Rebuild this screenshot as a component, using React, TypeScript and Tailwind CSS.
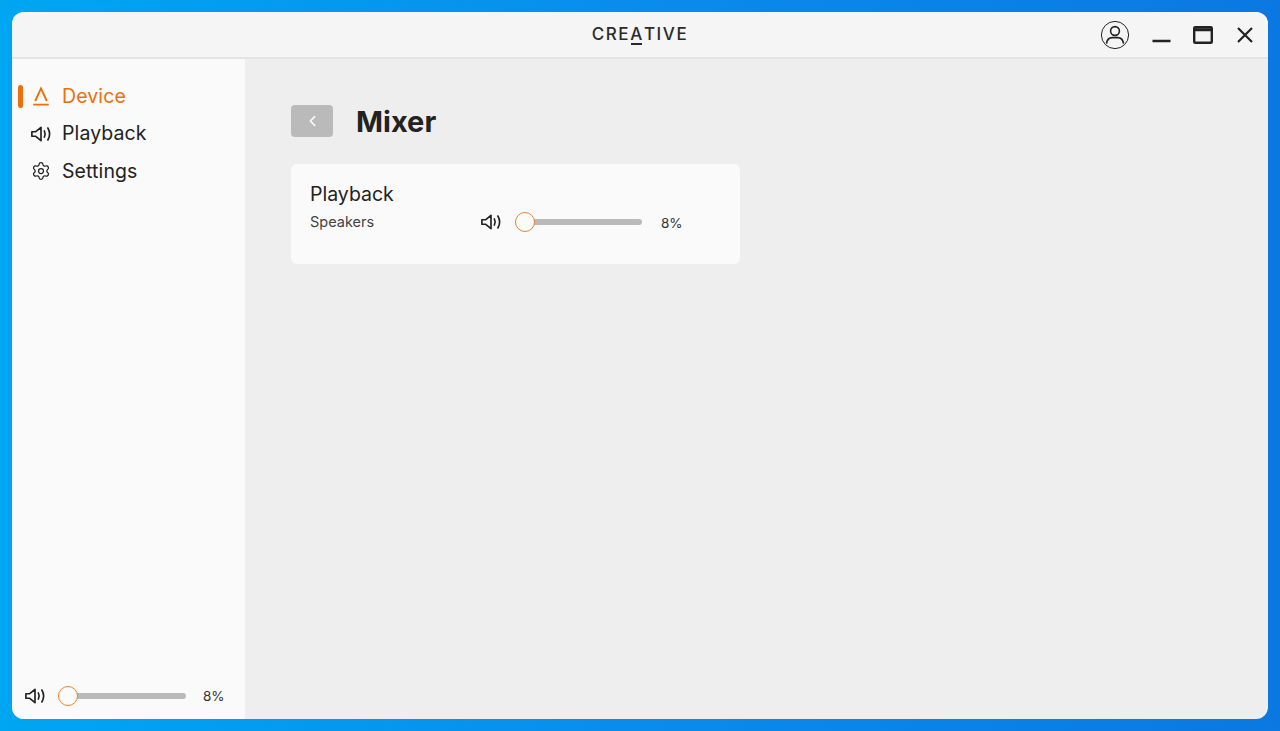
import { Settings } from "lucide-react";

const font = { fontFamily: "Inter, 'Noto Sans', sans-serif" };

function SpeakerIcon({ className }: { className?: string }) {
  return (
    <svg viewBox="0.4 1 18 18" fill="none" stroke="currentColor" strokeWidth="1.5" strokeLinecap="round" strokeLinejoin="round" className={className}>
      <path d="M1.2 8v4h3.2l5 4V4l-5 4z" />
      <path d="M12.4 7.2c.9 1.7.9 3.9 0 5.6" />
      <path d="M15.6 4.6c1.9 3.3 1.9 7.5 0 10.8" />
    </svg>
  );
}

function Slider({ width }: { width: string }) {
  return (
    <div className={`relative h-[6px] rounded-full bg-[#bababa] ${width}`}>
      <div className="absolute left-[-10px] top-[-7px] h-[20px] w-[20px] rounded-full border border-[#e8842c] bg-[#fbfbfb]" />
    </div>
  );
}

function NavItem({ label, active, icon }: { label: string; active?: boolean; icon: React.ReactNode }) {
  return (
    <div className="relative flex h-[37.5px] items-center">
      {active && <div className="absolute left-[6px] top-[7px] h-[23px] w-[5px] rounded-full bg-[#ec6f0e]" />}
      <div className={`ml-[19px] flex w-[20px] justify-center ${active ? "text-[#e8710e]" : "text-[#222]"}`}>{icon}</div>
      <span className={`ml-[11px] text-[19.5px] tracking-[0.1px] ${active ? "text-[#e8710e]" : "text-[#222]"}`}>{label}</span>
    </div>
  );
}

export default function App() {
  return (
    <div
      className="h-[731px] w-[1280px] overflow-hidden bg-gradient-to-r from-[#00a6f2] via-[#0a8cec] to-[#0b78e2] px-3 pb-3 pt-3"
      style={font}
    >
      <div className="flex h-[707px] w-[1256px] flex-col overflow-hidden rounded-[12px] bg-[#eeeeee]">
        <header className="relative flex h-[47px] shrink-0 items-center justify-center border-b-2 border-[#e4e4e4] bg-[#f5f5f5]">
          <div className="text-[17px] font-medium tracking-[1.6px] text-[#2a2a2a]">
            CRE
            <span className="relative">
              A<span className="absolute bottom-[-1px] left-[1px] right-[2px] h-[2px] bg-[#2a2a2a]" />
            </span>
            TIVE
          </div>
          <div className="absolute right-[14px] top-0 flex h-[46px] items-center text-[#222]">
            <svg viewBox="0 0 30 30" fill="none" stroke="currentColor" className="mr-[22px] h-[30px] w-[30px]">
              <circle cx="15" cy="15" r="13.6" strokeWidth="1" />
              <circle cx="15" cy="11" r="4.4" strokeWidth="1.6" />
              <path d="M6.6 23c.6-3.6 3-5.4 5.6-5.4h5.6c2.6 0 5 1.8 5.6 5.4" strokeWidth="1.6" strokeLinecap="round" />
            </svg>
            <svg viewBox="0 0 20 20" fill="none" stroke="currentColor" className="mr-[21px] h-[20px] w-[20px]">
              <path d="M0.5 16h18" strokeWidth="2.4" />
            </svg>
            <svg viewBox="0 0 20 18" fill="none" stroke="currentColor" className="mr-[23px] h-[18px] w-[20px]">
              <rect x="1.2" y="1.2" width="17.6" height="15.6" rx="1" strokeWidth="2.4" />
              <path d="M1 3.8h18" strokeWidth="3" />
            </svg>
            <svg viewBox="0 0 18 18" fill="none" stroke="currentColor" className="h-[18px] w-[18px]">
              <path d="M2 2l14 14M16 2L2 16" strokeWidth="2.2" />
            </svg>
          </div>
        </header>
        <div className="flex min-h-0 flex-1">
          <aside className="flex w-[233px] shrink-0 flex-col justify-between bg-[#fafafa]">
            <nav className="pt-[18.6px]">
              <NavItem
                label="Device"
                active
                icon={
                  <svg viewBox="1 1 18 18" fill="none" stroke="currentColor" strokeWidth="1.7" className="h-[20px] w-[20px]">
                    <path d="M4.8 14.5L10 3.2l5.2 11.3" />
                    <path d="M3 17.8h14" />
                  </svg>
                }
              />
              <NavItem label="Playback" icon={<SpeakerIcon className="h-[20px] w-[20px]" />} />
              <NavItem label="Settings" icon={<Settings className="h-[20px] w-[20px]" strokeWidth={1.5} />} />
            </nav>
            <div className="flex h-[46px] items-center pl-[13px] text-[#222]">
              <SpeakerIcon className="h-[20px] w-[20px]" />
              <div className="ml-[23px]">
                <Slider width="w-[118px]" />
              </div>
              <span className="ml-[17px] text-[13.5px] text-[#333]">8%</span>
            </div>
          </aside>
          <main className="flex-1 pl-[46px] pt-[46px]">
            <div className="flex h-[33px] items-center">
              <div className="mb-[1px] flex h-[32px] w-[42px] items-center justify-center rounded-[4px] bg-[#bababa]">
                <svg viewBox="0 0 10 14" fill="none" stroke="#fafafa" strokeWidth="2" className="h-[12px] w-[9px]">
                  <path d="M7.5 2L2.5 7l5 5" strokeLinecap="round" strokeLinejoin="round" />
                </svg>
              </div>
              <h1 className="ml-[23px] text-[29px] font-bold text-[#222]">Mixer</h1>
            </div>
            <section className="mt-[26px] h-[100px] w-[449px] rounded-[6px] bg-[#fafafa] pl-[19px] pt-[17px]">
              <div className="text-[19.5px] leading-[26px] text-[#222]">Playback</div>
              <div className="mt-[3px] flex h-[24px] items-center">
                <span className="w-[171px] text-[14.5px] text-[#444]">Speakers</span>
                <SpeakerIcon className="h-[20px] w-[20px] text-[#222]" />
                <div className="ml-[24px]">
                  <Slider width="w-[117px]" />
                </div>
                <span className="ml-[19px] mt-[3px] text-[13.5px] text-[#333]">8%</span>
              </div>
            </section>
          </main>
        </div>
      </div>
    </div>
  );
}
